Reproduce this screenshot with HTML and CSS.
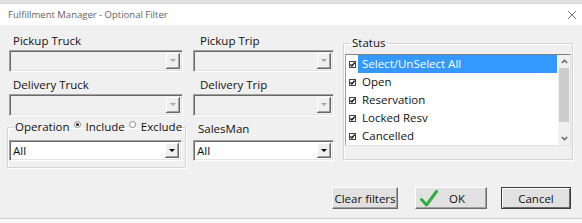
FILE: index.html
```html
<!DOCTYPE html>
<html lang="en">
<head>
  <meta charset="UTF-8">
  <title>Fulfillment Manager - Optional Filter</title>
  <link rel="stylesheet" href="styles.css">
</head>
<body>
  <div class="dialog">
    <div class="top-strip"></div>

    <!-- Title bar -->
    <div class="title-bar">
      <span class="title">Fulfillment Manager - Optional Filter</span>
      <svg class="close" width="10" height="10" viewBox="0 0 10 10" aria-label="Close">
        <path d="M1 1 L9 9 M9 1 L1 9" stroke="#7a7a7a" stroke-width="1" fill="none"/>
      </svg>
    </div>

    <div class="dialog-body">
      <div class="main-row">
        <!-- Filter fields -->
        <div class="fields">
          <div class="field">
            <div class="label">Pickup Truck</div>
            <div class="combo disabled">
              <span class="combo-text"></span>
              <span class="drop"><span class="arrow"></span></span>
            </div>
          </div>
          <div class="field">
            <div class="label label-right">Pickup Trip</div>
            <div class="combo disabled">
              <span class="combo-text"></span>
              <span class="drop"><span class="arrow"></span></span>
            </div>
          </div>
          <div class="field">
            <div class="label">Delivery Truck</div>
            <div class="combo disabled">
              <span class="combo-text"></span>
              <span class="drop"><span class="arrow"></span></span>
            </div>
          </div>
          <div class="field">
            <div class="label label-right">Delivery Trip</div>
            <div class="combo disabled">
              <span class="combo-text"></span>
              <span class="drop"><span class="arrow"></span></span>
            </div>
          </div>

          <fieldset class="group operation">
            <legend>
              Operation<span class="radio checked"></span>Include<span class="radio"></span>Exclude
            </legend>
            <div class="combo small">
              <span class="combo-text">All</span>
              <span class="drop"><span class="arrow"></span></span>
            </div>
          </fieldset>

          <div class="field sales">
            <div class="label label-sales">SalesMan</div>
            <div class="combo small">
              <span class="combo-text">All</span>
              <span class="drop"><span class="arrow"></span></span>
            </div>
          </div>
        </div>

        <!-- Status list -->
        <fieldset class="group status">
          <legend>Status</legend>
          <div class="listbox">
            <div class="items">
              <div class="item selected">
                <svg class="check" width="7" height="7" viewBox="0 0 7 7"><rect x=".5" y=".5" width="6" height="6" fill="#fff" stroke="#444"/><path d="M1.4 3.4 L2.9 5 L5.7 1.6" stroke="#000" stroke-width="1.3" fill="none"/></svg>
                <span class="item-text">Select/UnSelect All</span>
              </div>
              <div class="item">
                <svg class="check" width="7" height="7" viewBox="0 0 7 7"><rect x=".5" y=".5" width="6" height="6" fill="#fff" stroke="#444"/><path d="M1.4 3.4 L2.9 5 L5.7 1.6" stroke="#000" stroke-width="1.3" fill="none"/></svg>
                <span class="item-text">Open</span>
              </div>
              <div class="item">
                <svg class="check" width="7" height="7" viewBox="0 0 7 7"><rect x=".5" y=".5" width="6" height="6" fill="#fff" stroke="#444"/><path d="M1.4 3.4 L2.9 5 L5.7 1.6" stroke="#000" stroke-width="1.3" fill="none"/></svg>
                <span class="item-text">Reservation</span>
              </div>
              <div class="item">
                <svg class="check" width="7" height="7" viewBox="0 0 7 7"><rect x=".5" y=".5" width="6" height="6" fill="#fff" stroke="#444"/><path d="M1.4 3.4 L2.9 5 L5.7 1.6" stroke="#000" stroke-width="1.3" fill="none"/></svg>
                <span class="item-text">Locked Resv</span>
              </div>
              <div class="item">
                <svg class="check" width="7" height="7" viewBox="0 0 7 7"><rect x=".5" y=".5" width="6" height="6" fill="#fff" stroke="#444"/><path d="M1.4 3.4 L2.9 5 L5.7 1.6" stroke="#000" stroke-width="1.3" fill="none"/></svg>
                <span class="item-text">Cancelled</span>
              </div>
            </div>
            <div class="scrollbar">
              <div class="sb-btn">
                <svg width="7" height="5" viewBox="0 0 7 5"><path d="M0.8 4 L3.5 1.3 L6.2 4" stroke="#606060" stroke-width="1.4" fill="none"/></svg>
              </div>
              <div class="thumb"></div>
              <div class="track"></div>
              <div class="sb-btn">
                <svg width="7" height="5" viewBox="0 0 7 5"><path d="M0.8 1 L3.5 3.7 L6.2 1" stroke="#606060" stroke-width="1.4" fill="none"/></svg>
              </div>
            </div>
          </div>
        </fieldset>
      </div>

      <!-- Buttons -->
      <div class="button-row">
        <button class="btn clear-btn">Clear filters</button>
        <button class="btn ok-btn">
          <svg class="ok-icon" width="18" height="17" viewBox="0 0 18 17"><path d="M1.5 9.5 L6.5 15 L16.5 1.5" stroke="#2fae3f" stroke-width="3" stroke-linecap="round" stroke-linejoin="round" fill="none"/></svg>
          OK
        </button>
        <button class="btn cancel-btn">Cancel</button>
      </div>
    </div>
    <div class="bottom"></div>
  </div>
</body>
</html>
```

FILE: styles.css
```css
/* Basic Reset */
* {
  margin: 0;
  padding: 0;
  box-sizing: border-box;
}

body {
  font-family: "Open Sans", "Noto Sans", sans-serif;
  font-size: 11.5px;
  color: #111;
  background: #fff;
}

.dialog {
  width: 582px;
  height: 223px;
  display: flex;
  flex-direction: column;
  background: #fff;
}

.top-strip {
  height: 4px;
  background: #e2e2e2;
  border-bottom: 1px solid #d4d4d4;
}

/* Title bar */
.title-bar {
  height: 21px;
  display: flex;
  align-items: center;
  justify-content: space-between;
  padding: 0 5px 0 8px;
  background: #fff;
}

.title {
  font-size: 9.5px;
  color: #5f5f5f;
}

/* Body */
.dialog-body {
  height: 194px;
  background: #f0f0f0;
  padding: 3px 9px 0 9px;
  border-bottom: 1px solid #cfcfcf;
}

.bottom {
  flex: 1;
  background: #f7f7f7;
}

.main-row {
  display: flex;
  align-items: flex-start;
}

.fields {
  display: grid;
  grid-template-columns: 174px 141px;
  column-gap: 10px;
  align-items: start;
}

.field {
  margin-top: 4px;
}

.label {
  line-height: 18px;
  padding-left: 4px;
  white-space: nowrap;
}

.label-right {
  padding-left: 7px;
}

.label-sales {
  padding-left: 5px;
}

/* Combo boxes */
.combo {
  height: 22px;
  display: flex;
  background: #fff;
  border: 1px solid;
  border-color: #a0a0a0 #fff #fff #a0a0a0;
  box-shadow: inset 1px 1px 0 #696969, inset -1px -1px 0 #e3e3e3;
  padding: 2px;
}

.combo.disabled {
  background: #f0f0f0;
}

.combo.small {
  height: 21px;
}

.combo-text {
  flex: 1;
  line-height: 15px;
  padding-left: 1px;
}

.drop {
  width: 14px;
  display: flex;
  align-items: center;
  justify-content: center;
  background: #f0f0f0;
  border-right: 1px solid #696969;
  border-bottom: 1px solid #696969;
  box-shadow: inset 1px 1px 0 #fff, inset -1px -1px 0 #a0a0a0;
}

.arrow {
  width: 0;
  height: 0;
  border-left: 3px solid transparent;
  border-right: 3px solid transparent;
  border-top: 3px solid #000;
}

.disabled .arrow {
  border-top-color: #a8a8a8;
}

/* Group boxes */
.group {
  min-width: 0;
  border: 1px solid #d5d5d5;
  box-shadow: 1px 1px 0 #fff, inset 1px 1px 0 #fff;
}

.group legend {
  line-height: 18px;
  padding: 0 2px;
  white-space: nowrap;
}

.operation {
  margin: 2px -3px 0 -2px;
  padding: 4px 3px 6px 1px;
}

.operation legend {
  margin-left: 4px;
  padding-right: 0;
}

.sales {
  margin-top: 4px;
}

.sales .combo {
  margin-top: 2px;
}

.radio {
  display: inline-block;
  width: 7px;
  height: 7px;
  border-radius: 50%;
  border: 1px solid #8a8a8a;
  background: #fff;
  margin: 0 5px 0 4px;
  vertical-align: 3px;
  position: relative;
}

.radio.checked::after {
  content: "";
  position: absolute;
  left: 1px;
  top: 1px;
  width: 3px;
  height: 3px;
  border-radius: 50%;
  background: #222;
}

/* Status list */
.status {
  width: 230px;
  height: 126px;
  margin-left: 9px;
  margin-top: 6px;
  padding: 2px 1px 0 1px;
}

.status legend {
  margin-left: 5px;
}

.listbox {
  height: 92px;
  display: flex;
  background: #fff;
  border: 1px solid;
  border-color: #828282 #e3e3e3 #e3e3e3 #a0a0a0;
}

.items {
  flex: 1;
}

.item {
  height: 18px;
  display: flex;
  align-items: center;
  padding-left: 3px;
}

.check {
  flex: none;
}

.item-text {
  flex: 1;
  margin: 0 1px 0 2px;
  padding-left: 4px;
  line-height: 18px;
  white-space: nowrap;
}

.selected .item-text {
  background: #3399ff;
  color: #fff;
}

.scrollbar {
  width: 12px;
  display: flex;
  flex-direction: column;
  background: #f0f0f0;
}

.sb-btn {
  height: 13px;
  display: flex;
  align-items: center;
  justify-content: center;
}

.thumb {
  height: 54px;
  margin: 0 1px;
  background: #cdcdcd;
}

.track {
  flex: 1;
}

/* Buttons */
.button-row {
  display: flex;
  justify-content: flex-end;
  margin: 19px 2px 0 0;
}

.btn {
  height: 22px;
  font-family: inherit;
  font-size: 11.5px;
  color: #111;
  background: #e1e1e1;
  border: 1px solid;
  border-color: #fff #696969 #696969 #fff;
  box-shadow: inset -1px -1px 0 #a0a0a0;
  display: flex;
  align-items: center;
  justify-content: center;
}

.clear-btn {
  width: 66px;
}

.ok-btn {
  width: 72px;
  margin-left: 17px;
  justify-content: flex-start;
  padding-left: 4px;
}

.ok-icon {
  margin-right: 11px;
}

.cancel-btn {
  width: 70px;
  margin-left: 14px;
  border-color: #3c3c3c;
  box-shadow: inset 1px 1px 0 #fff, inset -1px -1px 0 #696969;
}
```
